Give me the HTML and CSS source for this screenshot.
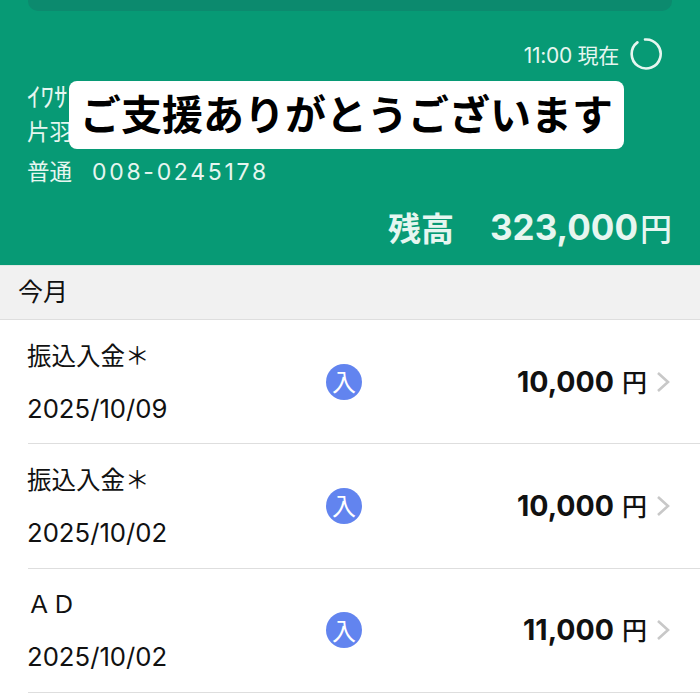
FILE: index.html
```html
<!DOCTYPE html>
<html lang="ja">

<head>
  <meta charset="UTF-8">
  <meta name="viewport" content="width=device-width, initial-scale=1.0">
  <title>入出金明細</title>
  <link rel="stylesheet" href="styles.css">
</head>

<body>
  <header class="account">
    <div class="top-card"></div>
    <div class="updated">
      <span class="updated-time">11:00 現在</span>
      <svg class="reload" width="34" height="34" viewBox="0 0 34 34" fill="none" stroke="#e6f6f0" stroke-width="2.6">
        <path d="M8.4 5.4A14.5 14.5 0 1 0 16 2.5" stroke-linecap="round" />
      </svg>
    </div>
    <div class="info">
      <p class="kana">ｲﾜｻ</p>
      <p class="branch">片羽</p>
      <p class="number"><span>普通</span><span class="number-value">008-0245178</span></p>
    </div>
    <div class="balance">
      <span class="balance-label">残高</span>
      <span class="balance-value">323,000</span><span class="balance-unit">円</span>
    </div>
    <div class="caption">ご支援ありがとうございます</div>
  </header>

  <div class="section-head">今月</div>

  <ul class="rows">
    <li class="row">
      <div class="row-text">
        <span class="row-name">振込入金＊</span>
        <span class="row-date">2025/10/09</span>
      </div>
      <span class="badge">入</span>
      <span class="amount">10,000<span class="yen">円</span></span>
      <svg class="chevron" width="14" height="22" viewBox="0 0 14 22" fill="none" stroke="#c8c8c8" stroke-width="2.6">
        <path d="M2 2L12 11L2 20" />
      </svg>
    </li>
    <li class="row">
      <div class="row-text">
        <span class="row-name">振込入金＊</span>
        <span class="row-date">2025/10/02</span>
      </div>
      <span class="badge">入</span>
      <span class="amount">10,000<span class="yen">円</span></span>
      <svg class="chevron" width="14" height="22" viewBox="0 0 14 22" fill="none" stroke="#c8c8c8" stroke-width="2.6">
        <path d="M2 2L12 11L2 20" />
      </svg>
    </li>
    <li class="row">
      <div class="row-text">
        <span class="row-name">ＡＤ</span>
        <span class="row-date">2025/10/02</span>
      </div>
      <span class="badge">入</span>
      <span class="amount">11,000<span class="yen">円</span></span>
      <svg class="chevron" width="14" height="22" viewBox="0 0 14 22" fill="none" stroke="#c8c8c8" stroke-width="2.6">
        <path d="M2 2L12 11L2 20" />
      </svg>
    </li>
  </ul>
</body>

</html>
```

FILE: styles.css
```css
* {
  box-sizing: border-box;
}

html,
body {
  height: 700px;
  overflow: hidden;
}

body {
  margin: 0;
  background-color: #fff;
  color: #111;
  font-family: Inter, "Noto Sans CJK JP", sans-serif;
}

p {
  margin: 0;
}

.account {
  position: relative;
  height: 266px;
  padding: 0 28px;
  background-color: #079a75;
  color: #e6f6f0;
  border-bottom: 1px solid #dfe8e4;
}

.top-card {
  height: 11px;
  background-color: #0c8a6e;
  border-radius: 0 0 10px 10px;
}

.updated {
  display: flex;
  justify-content: flex-end;
  align-items: center;
  gap: 10px;
  height: 34px;
  margin-top: 26px;
  margin-right: 9px;
  font-size: 21px;
}

.updated-time {
  letter-spacing: -0.3px;
}

.info {
  margin-top: 12px;
  margin-left: -1px;
  font-size: 22.5px;
}

.kana {
  height: 30px;
  font-size: 27px;
  line-height: 30px;
}

.branch {
  height: 30px;
  margin-top: 4px;
  line-height: 30px;
}

.number {
  display: flex;
  gap: 20px;
  height: 30px;
  margin-top: 10px;
  line-height: 30px;
}

.number-value {
  font-size: 23px;
  letter-spacing: 2.7px;
}

.balance {
  display: flex;
  justify-content: flex-end;
  align-items: center;
  height: 40px;
  margin-top: 20px;
  font-weight: 700;
  font-size: 35px;
}

.balance-label {
  margin-right: 36px;
  font-size: 33px;
}

.balance-unit {
  margin-left: 2px;
  font-size: 32px;
  font-weight: 500;
}

.caption {
  position: absolute;
  top: 81px;
  left: 69px;
  width: 555px;
  height: 68px;
  background-color: #fff;
  border-radius: 8px;
  color: #000;
  font-size: 41px;
  font-weight: 700;
  line-height: 68px;
  text-align: center;
  white-space: nowrap;
}

.section-head {
  height: 54px;
  padding-left: 18px;
  background-color: #f1f1f1;
  border-bottom: 1px solid #dedede;
  font-size: 25px;
  line-height: 52px;
}

.rows {
  margin: 0;
  padding: 0 0 0 28px;
  list-style: none;
}

.row {
  display: flex;
  align-items: center;
  height: 124.3px;
  padding-right: 29px;
  border-bottom: 1px solid #dedede;
}

.row-text {
  display: flex;
  flex-direction: column;
  gap: 22px;
  width: 298px;
  margin-left: -1px;
  margin-right: 1px;
  padding-top: 2px;
  font-size: 24.5px;
}

.row-name {
  height: 30px;
  line-height: 30px;
}

.row-date {
  height: 32px;
  font-size: 25.7px;
  line-height: 32px;
}

.badge {
  display: flex;
  justify-content: center;
  align-items: center;
  width: 36px;
  height: 36px;
  padding-bottom: 2px;
  border-radius: 50%;
  background-color: #6284ef;
  color: #fff;
  font-size: 24px;
}

.amount {
  flex: 1;
  padding-bottom: 2px;
  font-size: 28.5px;
  font-weight: 700;
  text-align: right;
}

.yen {
  margin-left: 8px;
  font-size: 25px;
  font-weight: 500;
}

.chevron {
  margin-left: 9px;
  margin-right: 1px;
}
```
